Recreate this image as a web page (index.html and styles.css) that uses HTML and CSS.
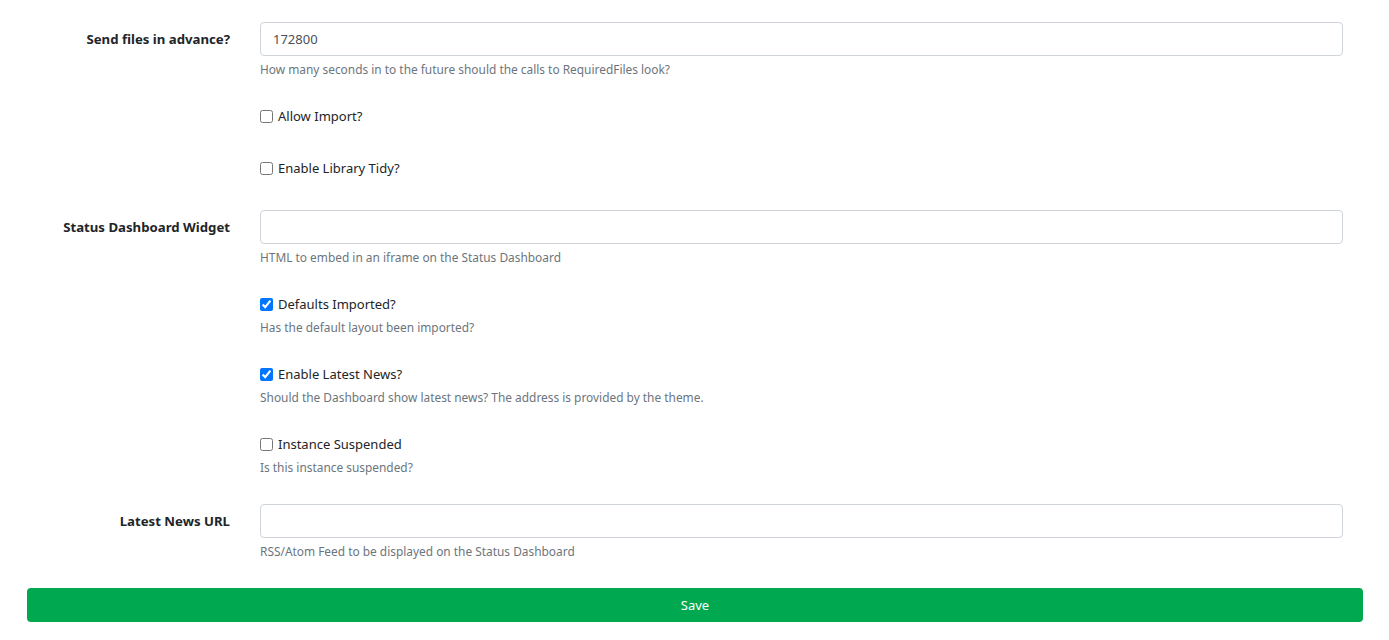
FILE: index.html
```html
<!DOCTYPE html>
<html lang="en">
<head>
  <meta charset="UTF-8">
  <meta name="viewport" content="width=device-width, initial-scale=1.0">
  <title>Settings</title>
  <link rel="stylesheet" href="styles.css">
</head>
<body>

    <!-- Form pengaturan -->
    <form class="settings">

        <div class="group">
            <label class="group-label" for="sendAhead">Send files in advance?</label>
            <div class="group-field">
                <input type="text" id="sendAhead" class="text-input" value="172800">
                <div class="help">How many seconds in to the future should the calls to RequiredFiles look?</div>
            </div>
        </div>

        <div class="group no-help">
            <span class="group-label"></span>
            <div class="group-field">
                <label class="check"><input type="checkbox"> Allow Import?</label>
            </div>
        </div>

        <div class="group no-help">
            <span class="group-label"></span>
            <div class="group-field">
                <label class="check"><input type="checkbox"> Enable Library Tidy?</label>
            </div>
        </div>

        <div class="group">
            <label class="group-label" for="widget">Status Dashboard Widget</label>
            <div class="group-field">
                <input type="text" id="widget" class="text-input">
                <div class="help">HTML to embed in an iframe on the Status Dashboard</div>
            </div>
        </div>

        <div class="group">
            <span class="group-label"></span>
            <div class="group-field">
                <label class="check"><input type="checkbox" checked> Defaults Imported?</label>
                <div class="help">Has the default layout been imported?</div>
            </div>
        </div>

        <div class="group">
            <span class="group-label"></span>
            <div class="group-field">
                <label class="check"><input type="checkbox" checked> Enable Latest News?</label>
                <div class="help">Should the Dashboard show latest news? The address is provided by the theme.</div>
            </div>
        </div>

        <div class="group">
            <span class="group-label"></span>
            <div class="group-field">
                <label class="check"><input type="checkbox"> Instance Suspended</label>
                <div class="help">Is this instance suspended?</div>
            </div>
        </div>

        <div class="group">
            <label class="group-label" for="newsUrl">Latest News URL</label>
            <div class="group-field">
                <input type="text" id="newsUrl" class="text-input">
                <div class="help">RSS/Atom Feed to be displayed on the Status Dashboard</div>
            </div>
        </div>

        <button type="submit" class="btn-save">Save</button>
    </form>

</body>
</html>
```

FILE: styles.css
```css
body {
  margin: 0;
  font-family: "Noto Sans", Arial, sans-serif;
  font-size: 13px;
  color: #212529;
  background-color: #fff;
}

/* Wrapper form */
.settings {
  padding: 22px 0 0 0;
}

/* Satu baris: label + field */
.group {
  display: grid;
  grid-template-columns: 208px 1fr;
  column-gap: 30px;
  padding: 0 46px 0 22px;
  margin-bottom: 27px;
}

.group.no-help {
  padding-bottom: 4px;
}

.group-label {
  font-size: 13.2px;
  font-weight: bold;
  text-align: right;
  padding-top: 7px;
  line-height: 21px;
}

.text-input {
  display: block;
  box-sizing: border-box;
  width: 100%;
  height: 34px;
  padding: 6px 12px;
  font-family: inherit;
  font-size: 13px;
  color: #495057;
  border: 1px solid #ced4da;
  border-radius: 4px;
  background-color: #fff;
}

.help {
  margin-top: 3px;
  font-size: 11.9px;
  line-height: 19px;
  color: #6c757d;
}

.text-input + .help {
  margin-top: 4px;
}

.check {
  display: flex;
  align-items: center;
  line-height: 21px;
}

.check input {
  width: 13px;
  height: 13px;
  margin: 0 5px 0 0;
}

/* Tombol simpan */
.btn-save {
  display: block;
  box-sizing: border-box;
  width: calc(100% - 53px);
  height: 34px;
  margin: 0 26px 0 27px;
  background-color: #00a84f;
  color: white;
  font-family: inherit;
  font-size: 13px;
  border: none;
  border-radius: 4px;
  cursor: pointer;
}
```
